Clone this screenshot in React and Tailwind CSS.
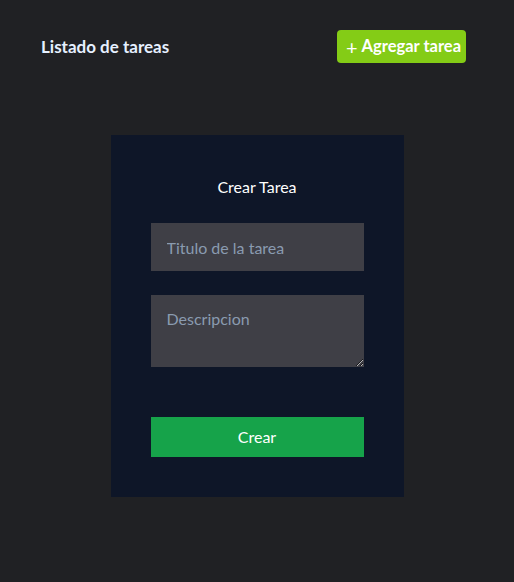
import React from "react";

export default function App() {
  return (
    <div className="min-h-[582px] bg-[#202124] font-['Lato',sans-serif]">
      <header className="flex items-center justify-between pl-[41px] pr-[48px] pt-[30px]">
        <h1 className="text-[17px] font-bold text-[#e6f0ff]">Listado de tareas</h1>
        <button className="flex h-[33px] w-[129px] items-center gap-[4px] rounded bg-[#84cc16] pl-[9px] text-[16.5px] font-bold text-white">
          <span className="text-[20px] font-normal leading-none">+</span>
          Agregar tarea
        </button>
      </header>

      <div className="mt-[72px] flex justify-center">
        <form className="flex w-[293px] flex-col bg-[#0e1628] px-10 pb-10 pt-10">
          <h2 className="text-center text-[16px] leading-6 text-white">Crear Tarea</h2>
          <input
            type="text"
            placeholder="Titulo de la tarea"
            className="mt-6 h-12 w-full bg-[#3f3f46] px-4 text-[16px] text-white placeholder:text-[#8a9bb0] outline-none"
          />
          <textarea
            placeholder="Descripcion"
            className="mt-6 h-[72px] w-full bg-[#3f3f46] px-4 py-3 text-[16px] text-white placeholder:text-[#8a9bb0] outline-none"
          />
          <button
            type="button"
            className="mt-[50px] h-10 w-full bg-[#16a34a] text-[16px] text-white"
          >
            Crear
          </button>
        </form>
      </div>
    </div>
  );
}
